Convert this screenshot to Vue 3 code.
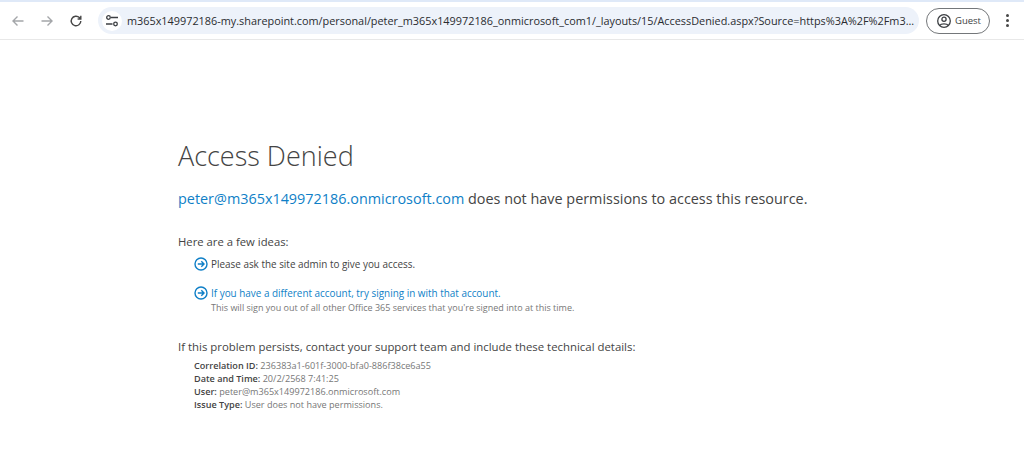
<script setup>
const details = [
  { label: 'Correlation ID:', value: '236383a1-601f-3000-bfa0-886f38ce6a55' },
  { label: 'Date and Time:', value: '20/2/2568 7:41:25' },
  { label: 'User:', value: 'peter@m365x149972186.onmicrosoft.com' },
  { label: 'Issue Type:', value: 'User does not have permissions.' }
]
</script>

<template>
  <div class="page">
    <div class="tabstrip"></div>
    <header class="toolbar">
      <button class="nav">
        <svg width="16" height="16" viewBox="0 0 16 16"><path d="M13.500 8H3M7.500 3.500 3 8l4.500 4.500" class="dim" /></svg>
      </button>
      <button class="nav">
        <svg width="16" height="16" viewBox="0 0 16 16"><path d="M2.500 8H13M8.500 3.500 13 8l-4.500 4.500" class="dim" /></svg>
      </button>
      <button class="nav">
        <svg width="16" height="16" viewBox="0 0 16 16"><path d="M12.800 8a4.800 4.800 0 1 1-1.400-3.400L12.800 6M12.800 2.800V6H9.600" class="dark" /></svg>
      </button>
      <div class="omnibox">
        <span class="tune">
          <svg width="14" height="14" viewBox="0 0 14 14">
            <circle cx="3.500" cy="3.500" r="1.800" class="thin" />
            <path d="M6 3.500h7M1 10h6.500" class="thin" />
            <circle cx="10.500" cy="10" r="1.800" class="thin" />
          </svg>
        </span>
        <span class="url">m365x149972186-my.sharepoint.com/personal/peter_m365x149972186_onmicrosoft_com1/_layouts/15/AccessDenied.aspx?Source=https%3A%2F%2Fm3...</span>
      </div>
      <div class="guest">
        <svg width="16" height="16" viewBox="0 0 16 16">
          <circle cx="8" cy="8" r="6.300" class="thin" />
          <circle cx="8" cy="6.300" r="2.100" class="thin" />
          <path d="M3.800 12.300C5 10.500 11 10.500 12.200 12.300" class="thin" />
        </svg>
        <span>Guest</span>
      </div>
      <div class="dots"><i></i><i></i><i></i></div>
    </header>

    <main class="content">
      <h1>Access Denied</h1>
      <p class="lead"><a>peter@m365x149972186.onmicrosoft.com</a> does not have permissions to access this resource.</p>

      <p class="section ideas">Here are a few ideas:</p>
      <div class="idea first">
        <svg class="arrow" width="14" height="14" viewBox="0 0 14 14"><circle cx="7" cy="7" r="6" /><path d="M3.800 7h6M7.300 4.300 10 7l-2.700 2.700" /></svg>
        <span>Please ask the site admin to give you access.</span>
      </div>
      <div class="idea second">
        <svg class="arrow" width="14" height="14" viewBox="0 0 14 14"><circle cx="7" cy="7" r="6" /><path d="M3.800 7h6M7.300 4.300 10 7l-2.700 2.700" /></svg>
        <div>
          <a>If you have a different account, try signing in with that account.</a>
          <div class="note">This will sign you out of all other Office 365 services that you're signed into at this time.</div>
        </div>
      </div>

      <p class="section persist">If this problem persists, contact your support team and include these technical details:</p>
      <div class="details">
        <div v-for="row in details" :key="row.label" class="detail">
          <b>{{ row.label }}</b> {{ row.value }}
        </div>
      </div>
    </main>
  </div>
</template>

<style scoped>
.page {
  width: 1024px;
  height: 475px;
  overflow: hidden;
  background: #fff;
  font-family: "Open Sans", "Noto Sans", sans-serif;
  color: #444;
}
.tabstrip {
  height: 2px;
  background: #dfe9f8;
}
.toolbar {
  height: 38px;
  box-sizing: border-box;
  border-bottom: 1px solid #e8e8e8;
  display: flex;
  align-items: center;
  padding-left: 3px;
}
.nav {
  width: 29px;
  height: 28px;
  padding: 0;
  border: 0;
  background: none;
  display: flex;
  align-items: center;
  justify-content: center;
}
.nav svg path {
  fill: none;
  stroke-width: 1.400;
}
.dim {
  stroke: #a4a6a9;
}
.dark {
  stroke: #474747;
}
.thin {
  fill: none;
  stroke: #3c3f43;
  stroke-width: 1.300;
}
.omnibox {
  width: 821px;
  height: 27px;
  margin-left: 8px;
  border-radius: 14px;
  background: #edf2fa;
  display: flex;
  align-items: center;
  box-sizing: border-box;
  padding-left: 4px;
}
.tune {
  width: 20px;
  height: 20px;
  border-radius: 50%;
  background: #fff;
  display: flex;
  align-items: center;
  justify-content: center;
  flex: none;
}
.url {
  margin-left: 5px;
  font-size: 10.870px;
  color: #2a2c30;
  white-space: nowrap;
}
.guest {
  width: 64px;
  height: 26px;
  margin-left: 7px;
  box-sizing: border-box;
  border: 1px solid #74777a;
  border-radius: 13px;
  display: flex;
  align-items: center;
  gap: 3px;
  padding-left: 9px;
  font-size: 9.500px;
  color: #3c3f43;
}
.dots {
  margin-left: 16px;
  display: flex;
  flex-direction: column;
  gap: 2px;
}
.dots i {
  width: 3px;
  height: 3px;
  border-radius: 50%;
  background: #474747;
}
.content {
  padding: 97px 0 0 178px;
}
h1 {
  margin: 0;
  font-size: 27px;
  font-weight: 300;
  line-height: 38px;
  color: #444;
}
.lead {
  margin: 14px 0 0;
  font-size: 14.400px;
  line-height: 20px;
  white-space: nowrap;
}
a {
  color: #0f7fc7;
}
.section {
  margin: 0;
  font-size: 11.300px;
  line-height: 16px;
  color: #444;
  white-space: nowrap;
}
.ideas {
  margin-top: 25px;
}
.persist {
  margin-top: 25px;
  font-size: 11.400px;
}
.idea {
  display: flex;
  gap: 3px;
  margin-left: 16px;
  font-size: 9.920px;
  line-height: 14px;
  white-space: nowrap;
}
.first {
  margin-top: 7px;
}
.second {
  margin-top: 15px;
}
.arrow {
  flex: none;
}
.arrow circle,
.arrow path {
  fill: none;
  stroke: #0f7fc7;
  stroke-width: 1.400;
}
.note {
  margin-top: 2px;
  font-size: 9px;
  line-height: 12px;
  color: #777;
}
.details {
  margin: 4px 0 0 16px;
}
.detail {
  font-size: 9.100px;
  line-height: 13px;
  color: #777;
  white-space: nowrap;
}
.detail b {
  color: #444;
  font-weight: 600;
}
</style>

<style>
html, body {
  margin: 0;
  background: #fff;
}
</style>
